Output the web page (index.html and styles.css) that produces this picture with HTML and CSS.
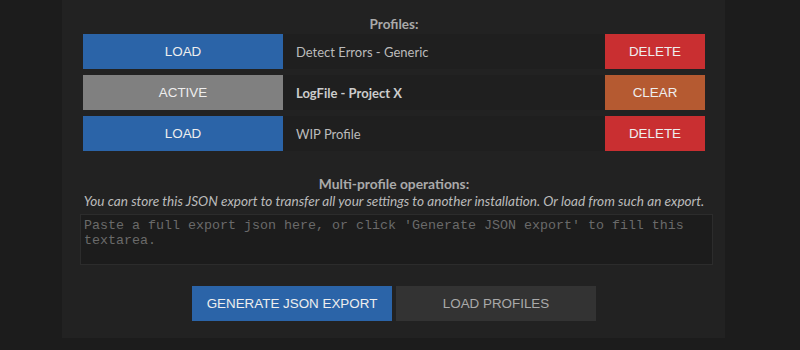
FILE: index.html
```html
<!DOCTYPE html>
<html lang="en">
<head>
    <meta charset="UTF-8">
    <meta name="viewport" content="width=device-width, initial-scale=1.0">
    <title>Profiles</title>
    <link rel="stylesheet" href="styles.css">
</head>
<body>
    <div class="panel">
        <h3 class="section-title">Profiles:</h3>
        <div class="profiles">
            <div class="profile-row">
                <button class="btn btn-blue">LOAD</button>
                <div class="profile-name">Detect Errors - Generic</div>
                <button class="btn btn-red">DELETE</button>
            </div>
            <div class="profile-row">
                <button class="btn btn-gray">ACTIVE</button>
                <div class="profile-name active">LogFile - Project X</div>
                <button class="btn btn-orange">CLEAR</button>
            </div>
            <div class="profile-row">
                <button class="btn btn-blue">LOAD</button>
                <div class="profile-name">WIP Profile</div>
                <button class="btn btn-red">DELETE</button>
            </div>
        </div>

        <h3 class="section-title multi">Multi-profile operations:</h3>
        <p class="hint">You can store this JSON export to transfer all your settings to another installation. Or load from such an export.</p>
        <textarea class="export" placeholder="Paste a full export json here, or click 'Generate JSON export' to fill this textarea."></textarea>

        <div class="actions">
            <button class="btn btn-blue">GENERATE JSON EXPORT</button>
            <button class="btn btn-dark">LOAD PROFILES</button>
        </div>
    </div>
</body>
</html>
```

FILE: styles.css
```css
body {
    margin: 0;
    background-color: #1c1c1c;
    font-family: Lato, "Open Sans", sans-serif;
    font-size: 13px;
    color: #bbb;
}
.panel {
    width: 622px;
    margin-left: 62px;
    padding: 15px 20px 17px 21px;
    background-color: #222;
}
.section-title {
    margin: 0;
    font-size: 13.5px;
    line-height: 19px;
    font-weight: bold;
    color: #aaa;
    text-align: center;
}
.section-title.multi {
    margin-top: 24px;
    line-height: 18px;
    font-size: 13.8px;
}
.profiles {
    display: flex;
    flex-direction: column;
    gap: 6px;
}
.profile-row {
    display: flex;
    height: 35px;
}
.profile-name {
    flex: 1;
    display: flex;
    align-items: center;
    padding-left: 13px;
    background-color: #1f1f1f;
    color: #bbb;
}
.profile-name.active {
    font-weight: bold;
    color: #ccc;
}
.btn {
    width: 200px;
    height: 35px;
    border: none;
    padding: 0;
    font-family: "Liberation Sans", Arial, sans-serif;
    font-size: 13.4px;
    color: #eee;
    cursor: pointer;
}
.profile-row .btn-red,
.profile-row .btn-orange {
    width: 100px;
}
.btn-blue {
    background-color: #2b64a8;
}
.btn-gray {
    background-color: #808080;
}
.btn-red {
    background-color: #c92f31;
}
.btn-orange {
    background-color: #b55a31;
}
.btn-dark {
    background-color: #333;
    color: #aaa;
}
.hint {
    margin: 0;
    line-height: 17px;
    font-size: 13.6px;
    font-style: italic;
    text-align: center;
    color: #bbb;
}
.export {
    display: block;
    box-sizing: border-box;
    width: 633px;
    height: 51px;
    margin: 4px 0 0 -3px;
    padding: 3px 3px;
    background-color: #1c1c1c;
    border: 1px solid #2c2c2c;
    font-family: "Liberation Mono", "Courier New", monospace;
    font-size: 13.33px;
    color: #bbb;
    resize: none;
}
.export::placeholder {
    color: #6a6a6a;
}
.actions {
    display: flex;
    justify-content: center;
    gap: 4px;
    margin-top: 21px;
}
```
